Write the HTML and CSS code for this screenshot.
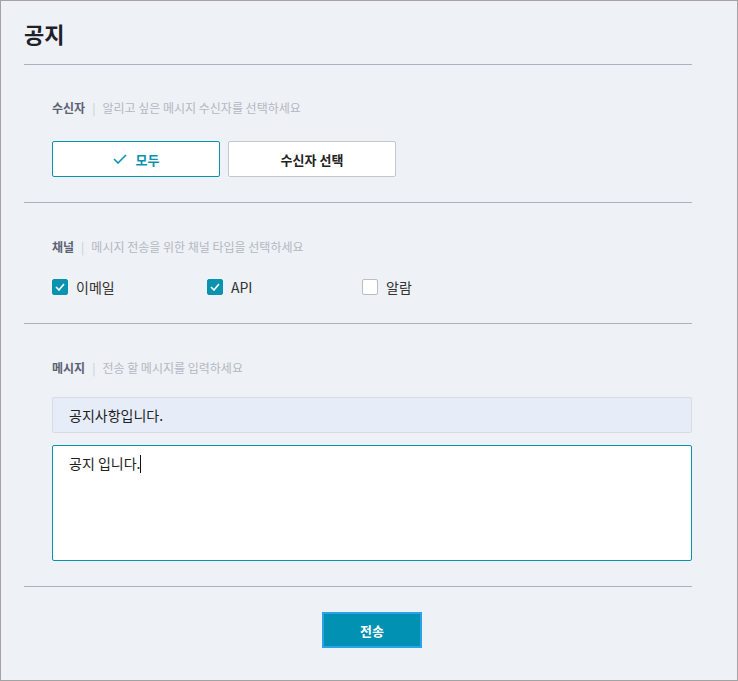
FILE: index.html
```html
<!DOCTYPE html>
<html>
<head>
    <title>공지</title>
    <link rel="stylesheet" href="styles.css">
</head>
<body>
<div class="page">
    <h1 class="title">공지</h1>

    <div class="section first">
        <p class="label"><b>수신자</b><span class="bar">|</span>알리고 싶은 메시지 수신자를 선택하세요</p>
        <div class="choices">
            <button class="choice selected">
                <svg width="14" height="10" viewBox="0 0 14 10"><path d="M1 5 L5 9 L13 1" fill="none" stroke="#0a93b0" stroke-width="1.6"/></svg>
                모두
            </button>
            <button class="choice">수신자 선택</button>
        </div>
    </div>

    <div class="section">
        <p class="label"><b>채널</b><span class="bar">|</span>메시지 전송을 위한 채널 타입을 선택하세요</p>
        <div class="channels">
            <label class="check"><span class="box on"><svg width="10" height="8" viewBox="0 0 10 8"><path d="M1 4 L4 7 L9 1" fill="none" stroke="#fff" stroke-width="1.6"/></svg></span>이메일</label>
            <label class="check"><span class="box on"><svg width="10" height="8" viewBox="0 0 10 8"><path d="M1 4 L4 7 L9 1" fill="none" stroke="#fff" stroke-width="1.6"/></svg></span>API</label>
            <label class="check"><span class="box"></span>알람</label>
        </div>
    </div>

    <div class="section">
        <p class="label"><b>메시지</b><span class="bar">|</span>전송 할 메시지를 입력하세요</p>
        <div class="subject">공지사항입니다.</div>
        <div class="body-text">공지 입니다.<span class="caret"></span></div>
    </div>

    <div class="footer">
        <button class="send">전송</button>
    </div>
</div>
</body>
</html>
```

FILE: styles.css
```css
* {
    box-sizing: border-box;
}
body {
    margin: 0;
    font-family: "Noto Sans CJK KR", "Noto Sans", sans-serif;
    color: #222;
}
.page {
    height: 681px;
    border: 1px solid #a3a3a3;
    background-color: #eef1f6;
    padding: 0 45px 0 23px;
}
.title {
    margin: 0;
    height: 64px;
    padding-top: 17px;
    font-size: 22px;
    line-height: 30px;
    font-weight: bold;
    color: #1e2128;
    border-bottom: 1px solid #aab2c0;
}
.section {
    padding: 36px 0 25px 28px;
    border-bottom: 1px solid #aab2c0;
}
.section.first {
    padding-top: 35px;
}
.label {
    margin: 0;
    font-size: 12px;
    line-height: 16px;
    color: #b3b8c2;
}
.label b {
    color: #5b6272;
}
.bar {
    color: #c8ccd4;
    margin: 0 7px;
}
.choices {
    display: flex;
    gap: 8px;
    margin-top: 25px;
}
.choice {
    width: 168px;
    height: 36px;
    background-color: #fff;
    border: 1px solid #c3c7d0;
    border-radius: 2px;
    font-family: inherit;
    font-size: 13px;
    font-weight: bold;
    color: #222;
    display: flex;
    align-items: center;
    justify-content: center;
    gap: 9px;
}
.choice.selected {
    border-color: #0a93b0;
    color: #0a93b0;
}
.channels {
    display: flex;
    margin-top: 22px;
    margin-bottom: 1px;
}
.check {
    width: 155px;
    display: flex;
    align-items: center;
    font-size: 14px;
    line-height: 20px;
    color: #333;
}
.box {
    width: 16px;
    height: 16px;
    border: 1px solid #b9bec8;
    border-radius: 2px;
    background-color: #fff;
    margin-right: 8px;
    display: flex;
    align-items: center;
    justify-content: center;
}
.box.on {
    background-color: #0a93b0;
    border-color: #0a93b0;
}
.subject {
    margin-top: 21px;
    height: 36px;
    background-color: #e6edf9;
    border: 1px solid #d6dbe4;
    border-radius: 2px;
    padding: 0 16px;
    font-size: 14px;
    line-height: 34px;
    color: #222;
}
.body-text {
    margin-top: 12px;
    height: 116px;
    background-color: #fff;
    border: 1px solid #0a93b0;
    border-radius: 2px;
    padding: 7px 16px;
    font-size: 14px;
    line-height: 20px;
    color: #222;
}
.caret {
    display: inline-block;
    width: 1px;
    height: 18px;
    background-color: #111;
    vertical-align: -4px;
}
.footer {
    display: flex;
    justify-content: center;
    padding: 25px 0 0 28px;
}
.send {
    width: 100px;
    height: 36px;
    background-color: #0091b3;
    border: 2px solid #2aa3ea;
    font-family: inherit;
    font-size: 13px;
    font-weight: bold;
    color: #fff;
}
```
